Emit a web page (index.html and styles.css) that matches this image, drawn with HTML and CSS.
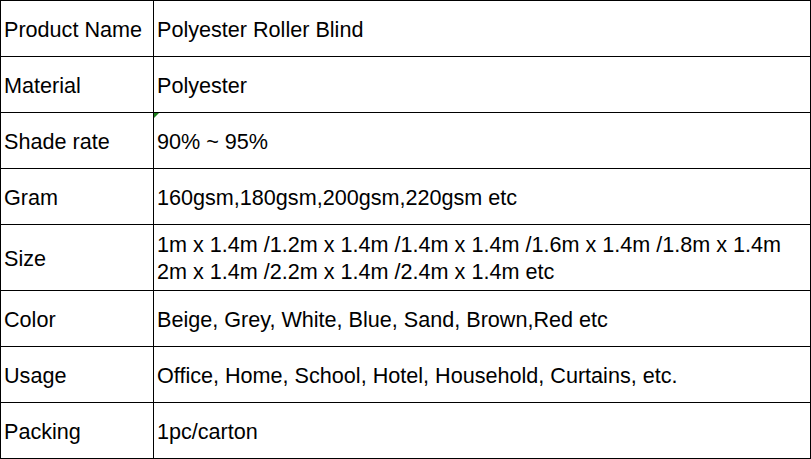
FILE: index.html
```html
<!DOCTYPE html>
<html>
<head>
<meta charset="utf-8">
<link rel="stylesheet" href="styles.css">
</head>
<body>
<div class="spec">
  <div class="cell"><span>Product Name</span></div><div class="cell"><span>Polyester Roller Blind</span></div>
  <div class="cell"><span>Material</span></div><div class="cell"><span>Polyester</span></div>
  <div class="cell"><span>Shade rate</span></div><div class="cell"><span class="flag"></span><span>90% ~ 95%</span></div>
  <div class="cell"><span>Gram</span></div><div class="cell"><span>160gsm,180gsm,200gsm,220gsm etc</span></div>
  <div class="cell"><span>Size</span></div><div class="cell"><span>1m x 1.4m /1.2m x 1.4m /1.4m x 1.4m /1.6m x 1.4m /1.8m x 1.4m<br>2m x 1.4m /2.2m x 1.4m /2.4m x 1.4m etc</span></div>
  <div class="cell"><span>Color</span></div><div class="cell"><span>Beige, Grey, White, Blue, Sand, Brown,Red etc</span></div>
  <div class="cell"><span>Usage</span></div><div class="cell"><span>Office, Home, School, Hotel, Household, Curtains, etc.</span></div>
  <div class="cell"><span>Packing</span></div><div class="cell"><span>1pc/carton</span></div>
</div>
</body>
</html>
```
FILE: styles.css
```css
html, body {
  margin: 0;
  padding: 0;
  background: #fff;
}
.spec {
  display: grid;
  grid-template-columns: 152px 656px;
  grid-template-rows: 55px 55px 55px 55px 65px 55px 55px 55px;
  gap: 1px;
  padding: 1px;
  background: #000;
  width: 809px;
  font-family: "Liberation Sans", Arial, sans-serif;
  font-size: 21.6px;
  line-height: 26.7px;
  color: #000;
}
.cell {
  background: #fff;
  display: flex;
  flex-direction: column;
  justify-content: center;
  padding: 3px 0 0 3px;
  white-space: nowrap;
  position: relative;
  box-sizing: border-box;
  overflow: hidden;
}
.flag {
  position: absolute;
  left: 0;
  top: 0;
  width: 0;
  height: 0;
  border-top: 5px solid #1a7f1a;
  border-right: 5px solid transparent;
}
```
